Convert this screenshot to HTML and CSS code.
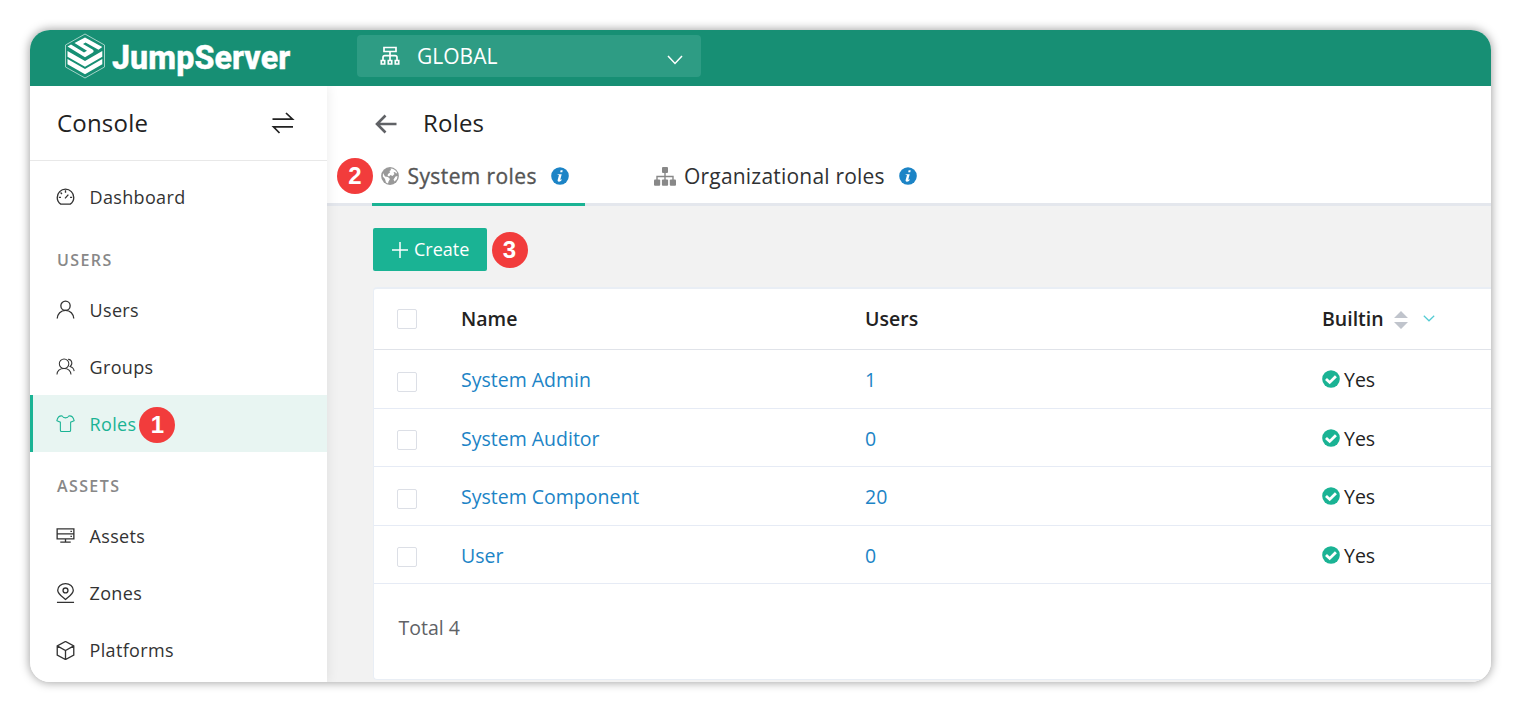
FILE: index.html
```html
<!DOCTYPE html>
<html lang="en">
<head>
<meta charset="utf-8">
<title>JumpServer</title>
<link rel="stylesheet" href="styles.css">
</head>
<body>
<svg class="defs" width="0" height="0">
  <symbol id="info" viewBox="0 0 18 18"><circle cx="9" cy="9" r="8.8" fill="#1c84c6"/><path d="M9.600 3.300h2.100l-.4 2H9.200zM6.600 7.200h4.100l-1.300 5c-.2.900.4.800 1.400.1l.2.500c-1 1.300-2 1.900-3 1.900-1.300 0-1.600-.8-1.300-1.900L7.900 8.600c.1-.5-.4-.7-1.400-.8z" fill="#fff"/></symbol>
  <symbol id="check" viewBox="0 0 18 18"><circle cx="9" cy="9" r="8.800" fill="#1ab394"/><path d="M4 8.900l3.700 3.500 6.200-6.200" fill="none" stroke="#fff" stroke-width="2.800"/></symbol>
</svg>
<div class="window">
  <header class="topbar">
    <div class="brand">
      <svg class="brand-mark" width="42" height="46" viewBox="0 0 42 46"><path d="M21 1L40.500 12v22L21 45 1.500 34V12z" fill="none" stroke="#a5d3c8" stroke-width="1"/><g fill="#fff"><path d="M3.500 13.500L7 11.500 20 19.500l3-1.800L10.500 10 21 4.500 38.300 14 34.500 16.800 21.500 9.500 19 11 28.500 16.500c1.500 1 1.500 2.300 0 3.300l-7.500 4.400z"/><path d="M3.500 18L21 28 38.300 18v5.800L21 33.800 3.500 23.800z"/><path d="M3.500 26L21 36 38.300 26v5.300L21 41.300 3.500 31.300z"/></g></svg>
      <span class="brand-name">JumpServer</span>
    </div>
    <div class="org">
      <svg width="20" height="20" viewBox="0 0 20 20" fill="none" stroke="#fff" stroke-width="1.700"><path d="M4 1.500h12v4H4zM10 5.500v9M3 14v-2.500c0-1.300.5-1.800 1.800-1.800h10.400c1.300 0 1.800.5 1.800 1.800V14M1.300 14.500h3.400V18H1.300zM8.300 14.500h3.400V18H8.300zM15.300 14.500h3.400V18h-3.400z"/></svg>
      <span class="org-name">GLOBAL</span>
      <svg width="16" height="10" viewBox="0 0 16 10" fill="none" stroke="#fff" stroke-width="1.500"><path d="M1 1l7 7.500L15 1"/></svg>
    </div>
  </header>
  <div class="body">
    <aside class="sidebar">
      <div class="side-head"><span>Console</span>
        <svg width="24" height="22" viewBox="0 0 24 22" fill="none" stroke="#222" stroke-width="1.700"><path d="M1.500 7.200h20L15 1M22 14.800H2.500L8.500 21"/></svg>
      </div>
      <nav class="menu">
        <div class="item"><svg class="ico" viewBox="0 0 20 20"><path d="M5 18C2.500 16.300 1.300 14 1.300 11a8.700 8.700 0 0 1 17.400 0c0 3-1.200 5.300-3.700 7z"/><path d="M9.500 12L13 8M10 3.500V6M4.800 5.800l1.500 1.500M3 11h2.200M14.800 11H17"/></svg><span>Dashboard</span></div>
        <div class="group">USERS</div>
        <div class="item"><svg class="ico" viewBox="0 0 20 20"><circle cx="10" cy="6" r="4.900"/><path d="M1.300 19.500c.2-5 3.700-8.600 8.700-8.600s8.500 3.600 8.700 8.600"/></svg><span>Users</span></div>
        <div class="item"><svg class="ico thin" viewBox="0 0 20 20"><circle cx="8.500" cy="7" r="5"/><path d="M1 18.500c.2-3.900 3.100-6.500 7.500-6.500s7 2.600 7.300 6.500M12.800 2.500c3.700-.2 5.400 4.900 2.100 7.400 2.600.8 4 2.500 4.200 5"/></svg><span>Groups</span></div>
        <div class="item active"><svg class="ico thin" viewBox="0 0 20 20"><path d="M6.500 2c1.200 2.800 5.800 2.800 7 0 2.700-.3 4.700.9 5.600 5l-3.700 1.600v8.500c0 1-.4 1.400-1.300 1.400H5.900c-.9 0-1.300-.4-1.300-1.400V8.600L.9 7c.9-4.100 2.900-5.300 5.600-5z"/></svg><span>Roles</span><b class="pin pin-menu">1</b></div>
        <div class="group assets">ASSETS</div>
        <div class="item"><svg class="ico" viewBox="0 0 20 20"><path d="M1.200 2h17.600v10.500H1.200zM1.200 7.200h17.600M10 12.500V16M4.500 16h11M15.200 4.600h1.600M15.200 9.800h1.600"/></svg><span>Assets</span></div>
        <div class="item"><svg class="ico" viewBox="0 0 20 20" overflow="visible"><path d="M10 16.300C5.800 12.700 1.800 10.200 1.800 6.500 1.800 2.300 5.600-.4 10-.4s8.200 2.700 8.200 6.900c0 3.700-4 6.200-8.200 9.800zM1 19.300h18"/><circle cx="10" cy="6.800" r="2.600"/></svg><span>Zones</span></div>
        <div class="item"><svg class="ico" viewBox="0 0 20 20"><path d="M10 .5l8.700 4.700v9.600L10 19.500l-8.700-4.700V5.200zM1.300 5.200L10 10l8.700-4.800M10 10v9.500"/></svg><span>Platforms</span></div>
      </nav>
    </aside>
    <main class="main">
      <div class="page-head">
        <svg width="22" height="20" viewBox="0 0 22 20" fill="none" stroke="#606266" stroke-width="2.600"><path d="M10.500 1.500L2 10l8.500 8.500M2 10h19.500"/></svg>
        <h1>Roles</h1>
      </div>
      <div class="tabs">
        <div class="tab current">
          <b class="pin pin-tab">2</b>
          <svg width="18" height="18" viewBox="0 0 18 18"><circle cx="9" cy="9" r="8.900" fill="#999"/><path d="M9.500 1.500c3 0 5.500 1.700 6.700 4.500l-1.200.5-1-1.500-1.500.5 1 1.500-2 2-2-1-1.500 1.500-1.500-1 .5-1.500 2-1.500-.5-1.500 1.500-1zM2 6l2 3.500 3 .5 2 2-1.500 2.500-.5 2-2-1L4 12 1.800 9.500zM14.500 9.500l2-.5-.5 3-2.500 2.500-1-2z" fill="#fff"/></svg>
          <span>System roles</span>
          <svg class="tip" width="18" height="18"><use href="#info"/></svg>
        </div>
        <div class="tab second">
          <svg width="22" height="19" viewBox="0 0 22 19"><g fill="#888"><rect x="8" y="0" width="6" height="6" rx="1"/><rect x="0" y="12.500" width="6.200" height="6.200" rx="1"/><rect x="7.900" y="12.500" width="6.200" height="6.200" rx="1"/><rect x="15.800" y="12.500" width="6.200" height="6.200" rx="1"/></g><path d="M3 13V9.500h16V13M11 5v8" fill="none" stroke="#888" stroke-width="1.400"/></svg>
          <span>Organizational roles</span>
          <svg class="tip" width="18" height="18"><use href="#info"/></svg>
        </div>
      </div>
      <div class="content">
        <div class="actions">
          <button class="create"><svg width="16" height="16" viewBox="0 0 16 16" stroke="#fff" stroke-width="1.500"><path d="M8 0v16M0 8h16"/></svg><span>Create</span></button>
          <b class="pin">3</b>
        </div>
        <section class="panel">
          <div class="row head"><i class="box"></i><span>Name</span><span>Users</span><span class="builtin">Builtin
            <svg width="14" height="18" viewBox="0 0 14 18" fill="#c0c4cc"><path d="M0 7l7-7 7 7zM0 11h14l-7 7z"/></svg>
            <svg class="filter" width="12" height="7" viewBox="0 0 12 7" fill="none" stroke="#53cbd3" stroke-width="1.200"><path d="M.8.8L6 5.800 11.200.8"/></svg></span></div>
          <div class="row"><i class="box"></i><a>System Admin</a><a>1</a><span class="yes"><svg width="18" height="18"><use href="#check"/></svg>Yes</span></div>
          <div class="row"><i class="box"></i><a>System Auditor</a><a>0</a><span class="yes"><svg width="18" height="18"><use href="#check"/></svg>Yes</span></div>
          <div class="row"><i class="box"></i><a>System Component</a><a>20</a><span class="yes"><svg width="18" height="18"><use href="#check"/></svg>Yes</span></div>
          <div class="row"><i class="box"></i><a>User</a><a>0</a><span class="yes"><svg width="18" height="18"><use href="#check"/></svg>Yes</span></div>
          <div class="total">Total 4</div>
        </section>
      </div>
    </main>
  </div>
</div>
</body>
</html>
```

FILE: styles.css
```css
* { box-sizing: border-box; }
body { margin: 0; padding: 30px; height: 702px; overflow: hidden; background: #fff; font-family: "Open Sans", "Noto Sans", sans-serif; font-size: 19.5px; color: #303133; }
svg { flex: none; display: block; }
.defs { position: absolute; }
.window { width: 1461px; height: 652px; border-radius: 20px; overflow: hidden; box-shadow: 0 0 10px 1px rgba(0,0,0,.35); display: flex; flex-direction: column; }
.topbar { height: 56px; flex: none; background: #178f74; display: flex; align-items: flex-start; }
.brand { width: 327px; padding: 3px 0 0 34px; display: flex; color: #fff; }
.brand-name { margin-left: 6px; font-family: Roboto, "Open Sans", sans-serif; font-weight: 800; font-size: 33.5px; line-height: 49px; letter-spacing: .1px; white-space: nowrap; transform: scaleX(.96); transform-origin: left; -webkit-text-stroke: .4px #fff; }
.org { width: 344px; height: 42px; margin-top: 5px; padding: 0 18px 0 22.500px; border-radius: 4px; background: #2e9c84; display: flex; align-items: center; color: #fff; font-size: 21px; }
.org-name { flex: 1; margin-left: 17.500px; }
.org svg:last-child { margin-top: 7px; }
.body { flex: 1; min-height: 0; display: flex; }
.sidebar { width: 297px; flex: none; background: #fff; box-shadow: 0 0 12px rgba(0,0,0,.09); position: relative; z-index: 1; clip-path: inset(0 -20px 0 0); }
.side-head { height: 75px; padding: 0 32px 0 27px; border-bottom: 1px solid #e8e8e8; display: flex; align-items: center; justify-content: space-between; font-size: 24px; letter-spacing: .2px; color: #222; }
.side-head span { margin-top: -2px; }
.menu { padding-top: 7px; }
.item { height: 57px; padding-left: 26px; display: flex; align-items: center; font-size: 18px; letter-spacing: .35px; color: #333; }
.ico { width: 19px; height: 19px; margin-right: 14.500px; fill: none; stroke: currentColor; stroke-width: 1.400; }
.thin { stroke-width: 1.100; }
.active { background: #e8f5f2; border-left: 3px solid #1ab394; padding-left: 23px; color: #1ab394; }
.group { height: 56px; padding: 14px 0 0 27px; line-height: 42px; font-size: 16px; font-weight: 600; letter-spacing: 1.400px; color: #888; }
.assets { height: 55.500px; padding-top: 13px; }
.pin { width: 36px; height: 36px; flex: none; border-radius: 50%; background: #f23c3c; color: #fff; display: grid; place-items: center; font: bold 24px/36px "Liberation Sans", sans-serif; letter-spacing: 0; }
.pin-menu { margin: 3px 0 0 3px; }
.main { flex: 1; min-width: 0; background: #f2f2f2; display: flex; flex-direction: column; }
.page-head { height: 75px; flex: none; padding-left: 48px; background: #fff; display: flex; align-items: center; }
h1 { margin: -2px 0 0 26px; font-weight: 400; font-size: 24px; letter-spacing: .2px; color: #222; }
.tabs { height: 45px; flex: none; background: #fff; box-shadow: inset 0 -3px #e4e7ed; padding-left: 45px; display: flex; }
.tab { height: 45px; padding-bottom: 15px; display: flex; align-items: center; font-size: 21px; font-weight: 500; letter-spacing: .2px; white-space: nowrap; position: relative; }
.tab span { margin-left: 8px; }
.current { width: 213px; padding-left: 9px; border-bottom: 3px solid #1ab394; padding-bottom: 12px; color: #555; letter-spacing: .4px; -webkit-text-stroke: .35px #555; }
.current span { margin-left: 8.500px; }
.second { margin-left: 69px; }
.pin-tab { position: absolute; left: -35px; top: -3px; -webkit-text-stroke: 0; }
.tip { margin-left: 14px; }
.content { padding: 22px 0 3px 46px; flex: 1; }
.actions { height: 43px; display: flex; align-items: center; gap: 4.500px; }
.create { width: 114px; height: 43px; border: 0; border-radius: 2px; padding: 0 0 0 19px; background: #1ab394; color: #fff; display: flex; align-items: center; gap: 6px; font: 18px "Open Sans", sans-serif; }
.create span { margin-top: -2px; }
.panel { margin-top: 16px; height: 393px; background: #fff; border: 1px solid #e9eef5; border-top-width: 2px; border-right: 0; border-radius: 4px 0 0 4px; }
.row { height: 58.500px; padding-top: 2px; display: grid; grid-template-columns: 64px 404px 457px 1fr; padding-left: 23px; align-items: center; border-bottom: 1px solid #e6ebf5; }
.row a { color: #1c84c6; }
.head { height: 61px; padding-top: 0; font-weight: 600; color: #222; border-color: #e0e3e9; }
.head span { margin-top: -2px; }
.box { width: 20px; height: 20px; border: 1px solid #dcdfe6; border-radius: 2px; margin-top: 4px; }
.head .box { margin-top: 0; }
.builtin { display: flex; align-items: center; gap: 10px; }
.builtin svg { margin-top: 4px; }
.builtin .filter { margin: 1px 0 0 5.500px; }
.yes { display: flex; align-items: center; gap: 4px; color: #222; }
.yes svg { margin-top: -1px; }
.total { padding: 30px 0 0 24.500px; line-height: 28px; color: #606266; }
```
